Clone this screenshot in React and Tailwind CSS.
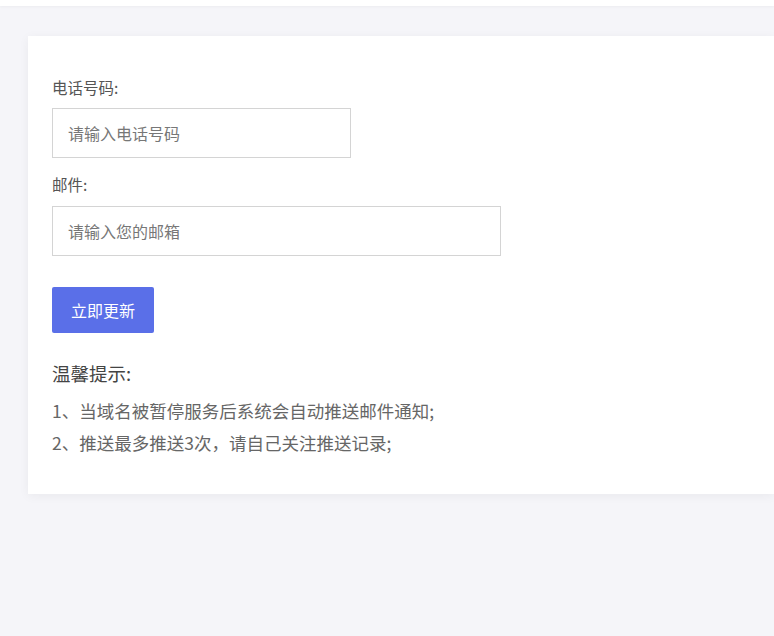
export default function App() {
  return (
    <div
      className="min-h-[636px] bg-[#f5f5f9]"
      style={{ fontFamily: '"Noto Sans CJK SC", "Noto Sans", sans-serif' }}
    >
      <div className="h-[6px] bg-white shadow-[0_1px_3px_rgba(0,0,0,0.04)]" />
      <div className="pl-[28px] pt-[30px]">
        <div className="bg-white pl-6 pt-[41px] pb-[35px] shadow-[0_2px_10px_rgba(0,0,0,0.05)]">
          <div className="h-5 text-[15.5px] leading-5 text-[#555]">电话号码:</div>
          <input
            placeholder="请输入电话号码"
            className="mt-[11px] block h-[50px] w-[299px] border border-[#d4d4d4] px-[15px] text-[16px] text-[#555] outline-none placeholder:text-[#777]"
          />
          <div className="mt-4 h-5 text-[15.5px] leading-5 text-[#555]">邮件:</div>
          <input
            placeholder="请输入您的邮箱"
            className="mt-[12px] block h-[50px] w-[449px] border border-[#d4d4d4] px-[15px] text-[16px] text-[#555] outline-none placeholder:text-[#777]"
          />
          <button className="mt-[31px] block h-[46px] w-[102px] rounded-[2px] bg-[#5a6fe8] text-[16px] text-white">
            立即更新
          </button>
          <div className="mt-[28px] text-[18.5px] leading-6 text-[#444]">温馨提示:</div>
          <div className="mt-[10px] text-[17.5px] leading-8 text-[#666]">
            <p>1、当域名被暂停服务后系统会自动推送邮件通知;</p>
            <p>2、推送最多推送3次，请自己关注推送记录;</p>
          </div>
        </div>
      </div>
    </div>
  );
}
